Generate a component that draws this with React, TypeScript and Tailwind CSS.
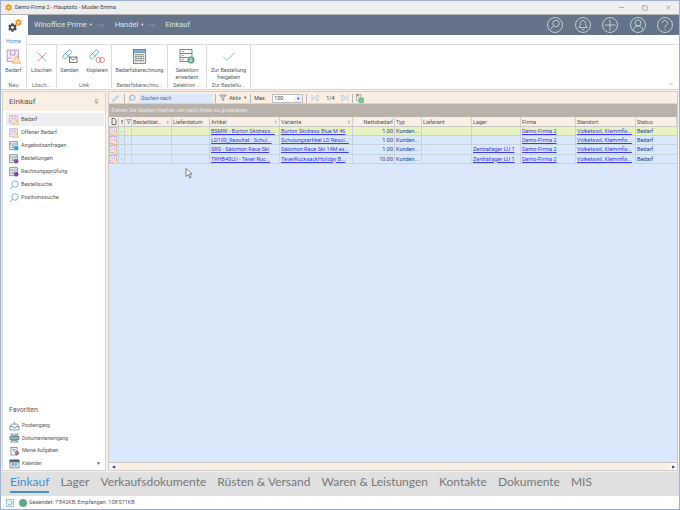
import { FaCog } from 'react-icons/fa';
import { Check, ChevronUp, Minus, Pencil, Pin, Search, Square, X } from 'lucide-react';

const columns = 'grid-cols-[10px_6px_7px_40px_38px_70px_73px_42px_27px_50px_49px_55px_60px_1fr]';

const headers = [
  '', '!', '', 'Bestelldat...', 'Lieferdatum', 'Artikel', 'Variante', 'Nettobedarf',
  'Typ', 'Lieferant', 'Lager', 'Firma', 'Standort', 'Status',
];

const rows = [
  { artikel: 'BSMW  -  Burton Skidress...', variante: 'Burton Skidress Blue M 46', menge: '1.00', lager: '' },
  { artikel: 'LD100_Resultat  -  Schul...', variante: 'Schulungsartikel LD Resul...', menge: '1.00', lager: '' },
  { artikel: 'SRS  -  Salomon Race Ski', variante: 'Salomon Race Ski 14M ex...', menge: '1.00', lager: 'Zentrallager LU 1' },
  { artikel: 'TRHB40LU  -  Tever Ruc...', variante: 'TeverRucksackHoliday B...', menge: '10.00', lager: 'Zentrallager LU 1' },
];

const sideItems = [
  { label: 'Bedarf', icon: 'box', active: true },
  { label: 'Offener Bedarf', icon: 'box' },
  { label: 'Angebotsanfragen', icon: 'quote' },
  { label: 'Bestellungen', icon: 'order' },
  { label: 'Rechnungsprüfung', icon: 'invoice' },
  { label: 'Bestellsuche', icon: 'search' },
  { label: 'Positionssuche', icon: 'search' },
];

const favorites = ['Posteingang', 'Dokumenteneingang', 'Meine Aufgaben', 'Kalender'];

const bottomTabs = [
  'Einkauf', 'Lager', 'Verkaufsdokumente', 'Rüsten & Versand',
  'Waren & Leistungen', 'Kontakte', 'Dokumente', 'MIS',
];

function BoxIcon({ size = 10 }: { size?: number }) {
  return (
    <svg width={size} height={size} viewBox="0 0 20 20" fill="none" className="shrink-0">
      <rect x="1.5" y="1.5" width="15" height="15" fill="#f6edf7" stroke="#b58cc0" strokeWidth="1.2" />
      <path d="M6 2v6h6V2M2 12h6" stroke="#b58cc0" strokeWidth="1.1" />
      <path d="M14 9l5.5 10h-11z" fill="#fde6c4" stroke="#eea54a" strokeWidth="1" />
    </svg>
  );
}

function SideIcon({ kind }: { kind: string }) {
  if (kind === 'box') return <BoxIcon />;
  if (kind === 'search') {
    return (
      <svg width="10" height="10" viewBox="0 0 20 20" fill="none" stroke="#3f9bd8" strokeWidth="1.4" className="shrink-0">
        <circle cx="12" cy="8" r="6.5" />
        <path d="M7.5 12.5L1.5 18.5" />
      </svg>
    );
  }
  const accent = kind === 'quote' ? '#3f9bd8' : kind === 'order' ? '#8b4a9c' : '#7a4a9c';
  return (
    <svg width="10" height="10" viewBox="0 0 20 20" fill="none" className="shrink-0">
      <rect x="1.5" y="1.5" width="15" height="16" fill="#eef1f2" stroke="#53707a" strokeWidth="1.4" />
      <path d="M2 6h14M5 10h8M5 13h5" stroke="#53707a" strokeWidth="1.2" />
      <circle cx="14.5" cy="14.5" r="4.5" fill={accent} />
    </svg>
  );
}

function FavIcon({ index }: { index: number }) {
  return (
    <svg width="11" height="10" viewBox="0 0 22 20" fill="none" stroke="#4a6a78" strokeWidth="1.3" className="shrink-0">
      {index === 0 && (
        <>
          <path d="M2 11l4-5h10l4 5v7H2z" />
          <path d="M2 11h6l1 3h4l1-3h6" />
          <path d="M11 1v6" stroke="#3f9bd8" />
        </>
      )}
      {index === 1 && (
        <>
          <path d="M3 2h16M3 18h16M5 2v3h12V2M5 18v-3h12v3" />
          <rect x="2" y="7" width="18" height="6" fill="#8ab4cc" />
        </>
      )}
      {index === 2 && (
        <>
          <rect x="4" y="3" width="12" height="15" />
          <path d="M7 7h6M7 10h6" />
          <circle cx="16" cy="14" r="3.5" fill="#d8635f" stroke="#3f6fa8" />
        </>
      )}
      {index === 3 && (
        <>
          <rect x="2" y="2" width="18" height="16" fill="#e9eef1" />
          <rect x="2" y="2" width="18" height="4" fill="#4a6a78" />
          <path d="M6 9h3v3H6zM12 9h3v3h-3zM6 14h3M12 14h3" stroke="#3f6fa8" />
        </>
      )}
    </svg>
  );
}

function NavCircle({ children }: { children: React.ReactNode }) {
  return (
    <svg width="16" height="16" viewBox="0 0 32 32" fill="none" stroke="#e4e8ec" strokeWidth="1.5">
      <circle cx="16" cy="16" r="15" />
      {children}
    </svg>
  );
}

function NavArrow({ className }: { className: string }) {
  return (
    <svg width="7" height="6" viewBox="0 0 14 12" fill="none" stroke="#8f9cac" strokeWidth="1.2" className={`shrink-0 ${className}`}>
      <path d="M0 6h13M8 1l5 5-5 5" />
    </svg>
  );
}

function RibbonButton({ label, icon, width }: { label: string; icon: React.ReactNode; width: string }) {
  return (
    <div className={`flex flex-col items-center ${width}`}>
      <div className="h-[15px] flex items-center justify-center">{icon}</div>
      <div className="mt-[3px] text-[5.5px] leading-[6.5px] text-[#5a5a5a] text-center whitespace-pre-line">{label}</div>
    </div>
  );
}

function RibbonGroup({ title, width, children }: { title: string; width: string; children: React.ReactNode }) {
  return (
    <div className={`${width} shrink-0 h-full flex flex-col border-r border-[#dcdcdc]`}>
      <div className="flex justify-center gap-[3px] pt-[4px] h-[38px]">{children}</div>
      <div className="text-[5.5px] leading-[6px] text-center text-[#6a6a6a] whitespace-nowrap overflow-hidden">{title}</div>
    </div>
  );
}

function Sep() {
  return <div className="w-px h-[9px] bg-[#b9b4ae] shrink-0" />;
}

function LinkText({ children }: { children: React.ReactNode }) {
  return <span className="underline text-[#3a3ae6] truncate">{children}</span>;
}

export default function App() {
  return (
    <div
      className="relative w-[680px] h-[510px] flex flex-col overflow-hidden bg-white border border-[#9fb0cc]"
      style={{ fontFamily: 'Roboto, "Liberation Sans", sans-serif' }}
    >
      {/* title bar */}
      <div className="h-[14px] shrink-0 bg-[#eeeeee] flex items-center pl-[4px] border-b border-[#b4b4b4]">
        <FaCog className="text-[#f0921e] w-[7px] h-[7px]" />
        <span className="ml-[3px] text-[5.5px] text-[#444444]">Demo-Firma 2 - Hauptsitz - Muster Emma</span>
        <div className="ml-auto flex items-center gap-[17px] pr-[7px] text-[#555555]">
          <Minus size={7} strokeWidth={1.5} />
          <Square size={6} strokeWidth={1.5} />
          <X size={7} strokeWidth={1.5} />
        </div>
      </div>

      {/* nav bar */}
      <div className="h-[20px] shrink-0 flex bg-[#647488]">
        <div className="w-[27px] bg-white relative shrink-0">
          <FaCog className="absolute left-[7px] top-[8px] w-[9px] h-[9px] text-[#4a4a4a]" />
          <FaCog className="absolute left-[14px] top-[4px] w-[7px] h-[7px] text-[#f0921e]" />
        </div>
        <div className="flex items-center text-[7.5px] text-[#dfe4ea] pl-[6px] flex-1">
          <span>Winoffice Prime</span>
          <span className="ml-[2px] text-[4px]">▼</span>
          <NavArrow className="ml-[4px]" />
          <span className="ml-[11px]">Handel</span>
          <span className="ml-[2px] text-[4px]">▼</span>
          <NavArrow className="ml-[4px]" />
          <span className="ml-[10px]">Einkauf</span>
          <div className="ml-auto flex items-center gap-[11.5px] pr-[6px]">
            <NavCircle>
              <circle cx="18" cy="13" r="6.5" />
              <path d="M13 18l-6 7" />
            </NavCircle>
            <NavCircle>
              <path d="M16 7c-4 0-5 3-5 6 0 4-2 6-3.500 8h17c-1.500-2-3.500-4-3.500-8 0-3-1-6-5-6zM13 24c1 2 5 2 6 0" />
            </NavCircle>
            <NavCircle>
              <path d="M16 5v22M5 16h22" />
            </NavCircle>
            <NavCircle>
              <circle cx="16" cy="12" r="6" />
              <path d="M6 27c1-6 5-9 10-9s9 3 10 9" />
            </NavCircle>
            <NavCircle>
              <path d="M11 12c0-7 10-7 10 0 0 4-5 4-5 9M16 24v2" />
            </NavCircle>
          </div>
        </div>
      </div>

      {/* ribbon tabs */}
      <div className="h-[10px] shrink-0 flex border-b border-[#dedede]">
        <div className="w-[26px] h-[11px] bg-white border-r border-[#dedede] text-center text-[5.5px] leading-[12px] text-[#3f8fd0]">Home</div>
      </div>

      {/* ribbon */}
      <div className="h-[45px] shrink-0 flex relative pb-[1px] border-b border-[#d8d4d0]">
        <RibbonGroup title="Neu" width="w-[26px]">
          <RibbonButton
            label="Bedarf"
            width="w-[24px]"
            icon={<BoxIcon size={15} />}
          />
        </RibbonGroup>
        <RibbonGroup title="Lösch..." width="w-[30px]">
          <RibbonButton label="Löschen" width="w-[26px]" icon={<X size={16} strokeWidth={1} className="text-[#e0555a]" />} />
        </RibbonGroup>
        <RibbonGroup title="Link" width="w-[55px]">
          <RibbonButton
            label="Senden"
            width="w-[23px]"
            icon={
              <svg width="16" height="15" viewBox="0 0 32 30" fill="none" stroke="#3f8fd0" strokeWidth="1.5">
                <path d="M2 14L13 3c3-3 8 2 5 5L8 19c-3 3-8-2-6-5zM7 9l7 6" />
                <rect x="15" y="16" width="15" height="11" fill="white" stroke="#555555" />
                <path d="M15 16l7.500 6 7.500-6" stroke="#555555" />
              </svg>
            }
          />
          <RibbonButton
            label="Kopieren"
            width="w-[26px]"
            icon={
              <svg width="16" height="15" viewBox="0 0 32 30" fill="none" stroke="#3f8fd0" strokeWidth="1.5">
                <path d="M2 14L13 3c3-3 8 2 5 5L8 19c-3 3-8-2-6-5zM7 9l7 6" />
                <circle cx="19" cy="22" r="5" stroke="#d8635f" />
                <circle cx="26" cy="22" r="5" stroke="#d8635f" />
              </svg>
            }
          />
        </RibbonGroup>
        <RibbonGroup title="Bedarfsberechnu..." width="w-[56px]">
          <RibbonButton
            label="Bedarfsberechnung"
            width="w-[54px]"
            icon={
              <svg width="13" height="15" viewBox="0 0 26 30" fill="none">
                <rect x="1" y="1" width="24" height="28" fill="#e9eef1" stroke="#4a6a78" strokeWidth="1.5" />
                <rect x="1" y="1" width="24" height="6" fill="#7fb2d8" stroke="#4a6a78" />
                <path d="M4 11h18M4 15h18M4 19h18M4 23h18" stroke="#8a8a8a" strokeWidth="2.500" strokeDasharray="4 1" />
              </svg>
            }
          />
        </RibbonGroup>
        <RibbonGroup title="Selektion ..." width="w-[39px]">
          <RibbonButton
            label={'Selektion\nerweitern'}
            width="w-[36px]"
            icon={
              <svg width="16" height="15" viewBox="0 0 32 30" fill="none" stroke="#4a6a78" strokeWidth="1.5">
                <rect x="2" y="1" width="24" height="24" fill="#f4f6f7" />
                <path d="M2 9h24M2 17h24M6 5h3M6 13h3M6 21h3" />
                <circle cx="24" cy="22" r="6.500" fill="#5fa58a" stroke="#5fa58a" />
                <path d="M24 18v7M21 22l3 3 3-3" stroke="white" />
              </svg>
            }
          />
        </RibbonGroup>
        <RibbonGroup title="Zur Bestellu..." width="w-[44px]">
          <RibbonButton
            label={'Zur Bestellung\nfreigeben'}
            width="w-[42px]"
            icon={<Check size={16} strokeWidth={1} className="text-[#3fb56a]" />}
          />
        </RibbonGroup>
        <ChevronUp size={6} strokeWidth={2} className="absolute right-[5px] bottom-[2px] text-[#777777]" />
      </div>

      {/* content */}
      <div className="flex-1 min-h-0 flex bg-[#f9efe5] pt-[1px] pb-[1px]">
        {/* sidebar */}
        <aside className="w-[104px] shrink-0 ml-[1px] flex flex-col border border-[#d8d4d0]">
          <div className="h-[19px] shrink-0 flex items-center justify-between pl-[6px] pr-[6px] text-[8px] text-[#555555]">
            <span>Einkauf</span>
            <Pin size={5} className="text-[#666666]" />
          </div>
          <div className="flex-1 bg-white flex flex-col pl-[3px] pt-[2px]">
            {sideItems.map((item) => (
              <div
                key={item.label}
                className={`h-[13px] w-[98px] shrink-0 flex items-center gap-[1px] pl-[3px] text-[5.5px] text-[#555555] ${item.active ? 'bg-[#efefef]' : ''}`}
              >
                <SideIcon kind={item.icon} />
                <span className="ml-[1px]">{item.label}</span>
              </div>
            ))}
            <div className="mt-auto pl-[3px] pb-[4px] text-[7px] text-[#555555]">Favoriten</div>
            {favorites.map((label, i) => (
              <div key={label} className="h-[12.700px] w-[98px] shrink-0 flex items-center gap-[1px] pl-[3px] text-[5px] text-[#555555]">
                <FavIcon index={i} />
                <span className="ml-[1px]">{label}</span>
                {i === 3 && <span className="ml-auto mr-[3px] text-[5px] text-[#666666]">▼</span>}
              </div>
            ))}
          </div>
        </aside>

        {/* grid area */}
        <main className="flex-1 min-w-0 ml-[2px] mr-[1px] flex flex-col border border-[#d0ccc7]">
          {/* toolbar */}
          <div className="h-[12px] shrink-0 flex items-center pl-[2px] pt-[1px] text-[5.5px] text-[#444444] border-b border-[#d8d4d0]">
            <Pencil size={7} className="ml-[1px] text-[#6aa0cc]" />
            <div className="w-[5px]" />
            <Sep />
            <Search size={8} className="ml-[3px] -scale-x-100 text-[#3f9bd8]" />
            <div className="ml-[3px] w-[74px] h-[9px] bg-[#dbe8fb] pl-[2px] leading-[9px] italic text-[#4a6a90]">Suchen nach</div>
            <div className="w-[2px]" />
            <Sep />
            <svg width="8" height="8" viewBox="0 0 16 16" className="ml-[3px]">
              <path d="M1 2h14l-5.500 6v6l-3-2V8z" fill="#c8c8c8" stroke="#777777" />
            </svg>
            <span className="ml-[2px]">Aktiv</span>
            <span className="ml-[2px] text-[4px]">▼</span>
            <div className="w-[3px]" />
            <Sep />
            <span className="ml-[3px]">Max.</span>
            <div className="ml-[6px] w-[31px] h-[9px] bg-white border border-[#bdbdbd] flex items-center justify-between pl-[1px] leading-[7px]">
              <span>100</span>
              <span className="w-[8px] h-[7px] bg-[#eef3fb] text-center text-[4px] leading-[7px] text-[#1c2f9a]">▼</span>
            </div>
            <div className="w-[3px]" />
            <Sep />
            <svg width="8" height="8" viewBox="0 0 16 16" fill="none" stroke="#6fa6dc" className="ml-[4px]">
              <path d="M2 2v12M14 2v12L5 8z" />
            </svg>
            <span className="ml-[7px]">1/4</span>
            <svg width="8" height="8" viewBox="0 0 16 16" fill="none" stroke="#6fa6dc" className="ml-[6px]">
              <path d="M14 2v12M2 2v12l9-6z" />
            </svg>
            <div className="w-[3px]" />
            <Sep />
            <svg width="8" height="9" viewBox="0 0 16 18" fill="none" className="ml-[3px]">
              <rect x="1" y="1" width="9" height="12" fill="#f4f4f4" stroke="#777777" />
              <rect x="6" y="8" width="9" height="9" fill="#7ec89a" stroke="#3f9a5e" />
              <circle cx="4" cy="3" r="2" fill="#d8635f" />
            </svg>
          </div>

          {/* group panel */}
          <div className="h-[13px] shrink-0 bg-[#b8b2ab] pl-[2px] flex items-center text-[5.5px] text-[#ece8e3]">
            Ziehen Sie Spalten hierher, um nach ihnen zu gruppieren.
          </div>

          {/* table */}
          <div className="flex-1 min-h-0 bg-[#dbe8fb] text-[5.5px]">
            <div className={`grid ${columns} h-[10px] bg-[#f9efe5] text-[#555555] border-b border-[#c9c9c9]`}>
              {headers.map((h, i) => (
                <div key={i} className={`relative border-r border-[#d3cec8] pl-[1px] leading-[10px] whitespace-nowrap overflow-hidden ${i === 7 ? 'text-right pr-[1px]' : ''} ${i === 1 ? 'font-bold text-center text-[#222222]' : ''}`}>
                  {i === 0 && (
                    <svg width="6" height="7" viewBox="0 0 12 14" fill="none" stroke="#444444" strokeWidth="1.500" className="mt-[1px] ml-[1px]">
                      <path d="M2 1h5l3 3v9H2z" />
                    </svg>
                  )}
                  {i === 2 && (
                    <svg width="5" height="5" viewBox="0 0 10 10" fill="none" stroke="#555555" className="mt-[2px]">
                      <path d="M1 1h8L6 5v4L4 8V5z" />
                    </svg>
                  )}
                  {h}
                  {(i === 3 || i === 5 || i === 6) && (
                    <span className="absolute right-[2px] top-0 text-[5px] text-[#444444]">↕</span>
                  )}
                </div>
              ))}
            </div>
            {rows.map((row, i) => (
              <div
                key={row.artikel}
                className={`grid ${columns} h-[9.200px] leading-[8.500px] border-b border-[#c6d3df] ${i === 0 ? 'bg-[#e8f2bd]' : 'bg-[#d9e8fa]'}`}
              >
                <div className="border-r border-[#c6d3df] overflow-hidden"><BoxIcon size={9} /></div>
                <div className="border-r border-[#c6d3df] text-center text-[#888888]">-</div>
                <div className="border-r border-[#c6d3df]" />
                <div className="border-r border-[#c6d3df]" />
                <div className="border-r border-[#c6d3df]" />
                <div className="border-r border-[#c6d3df] pl-[1px] overflow-hidden whitespace-nowrap"><LinkText>{row.artikel}</LinkText></div>
                <div className="border-r border-[#c6d3df] pl-[1px] overflow-hidden whitespace-nowrap"><LinkText>{row.variante}</LinkText></div>
                <div className="border-r border-[#c6d3df] text-right pr-[1px] text-[#2b3f9a]">{row.menge}</div>
                <div className="border-r border-[#c6d3df] pl-[1px] text-[#2b3f9a] whitespace-nowrap overflow-hidden">Kunden...</div>
                <div className="border-r border-[#c6d3df]" />
                <div className="border-r border-[#c6d3df] pl-[1px] overflow-hidden whitespace-nowrap"><LinkText>{row.lager}</LinkText></div>
                <div className="border-r border-[#c6d3df] pl-[1px] overflow-hidden whitespace-nowrap"><LinkText>Demo-Firma 2</LinkText></div>
                <div className="border-r border-[#c6d3df] pl-[1px] overflow-hidden whitespace-nowrap"><LinkText>Volketswil, Klemmfix...</LinkText></div>
                <div className="pl-[1px] text-[#2b3f9a]">Bedarf</div>
              </div>
            ))}
          </div>

          {/* horizontal scrollbar */}
          <div className="h-[8px] shrink-0 flex justify-between items-center bg-[#f9efe5] border-t border-[#c9c5c0]">
            <div className="w-[8px] h-[7px] bg-[#f4f4f4] text-[4px] leading-[7px] text-center text-[#1c2f9a]">◀</div>
            <div className="w-[8px] h-[7px] bg-[#fdfaf6] text-[4px] leading-[7px] text-center text-[#1c2f9a]">▶</div>
          </div>
        </main>
      </div>

      {/* module tabs */}
      <div
        className="h-[24px] shrink-0 bg-[#e0e0e0] flex items-start pl-[9px] gap-[11px]"
        style={{ fontFamily: 'Lato, "Liberation Sans", sans-serif' }}
      >
        {bottomTabs.map((tab, i) => (
          <div
            key={tab}
            className={`h-[21px] leading-[19px] text-[12px] whitespace-nowrap ${i === 0 ? 'text-[#3f8fd0] border-b-2 border-[#3f8fd0]' : 'text-[#777777]'}`}
          >
            {tab}
          </div>
        ))}
      </div>

      {/* status bar */}
      <div className="h-[13px] shrink-0 bg-white flex items-center pl-[5px] text-[5.5px] text-[#555555]">
        <svg width="8" height="8" viewBox="0 0 16 16" fill="none">
          <rect x="1" y="1" width="14" height="14" fill="#eef4fb" stroke="#6a8aa8" />
          <path d="M4 9a4 4 0 1 0 4-5" stroke="#3f9bd8" strokeWidth="1.500" />
        </svg>
        <span className="ml-[5px] w-[8px] h-[8px] rounded-full bg-[#66a690]" />
        <span className="ml-[2px]">Gesendet: 7'842KB, Empfangen: 108'571KB</span>
      </div>

      {/* mouse cursor in the shot */}
      <svg width="8" height="11" viewBox="0 0 16 22" className="absolute left-[184px] top-[167px]">
        <path d="M2 1v16l4-4 3 7 3-1-3-7h5z" fill="white" stroke="#555555" strokeWidth="1.500" />
      </svg>
    </div>
  );
}
